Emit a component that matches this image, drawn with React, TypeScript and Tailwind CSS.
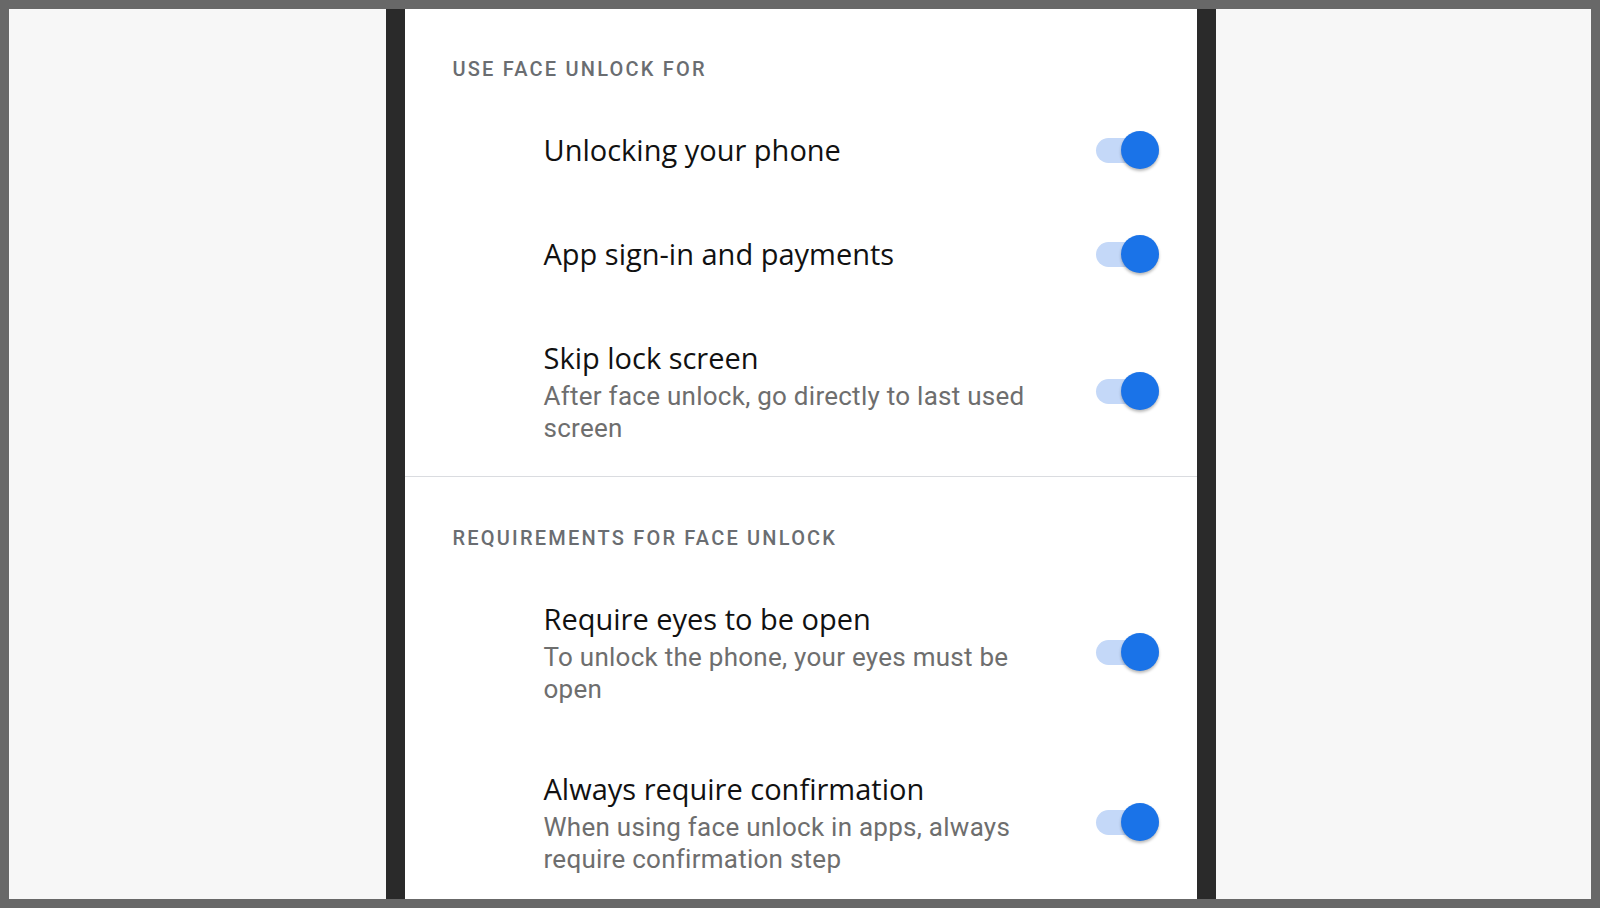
import React from "react";

const sections = [
  {
    title: "Use face unlock for",
    items: [
      { label: "Unlocking your phone" },
      { label: "App sign-in and payments" },
      { label: "Skip lock screen", sub: "After face unlock, go directly to last used screen" },
    ],
  },
  {
    title: "Requirements for face unlock",
    items: [
      { label: "Require eyes to be open", sub: "To unlock the phone, your eyes must be open" },
      { label: "Always require confirmation", sub: "When using face unlock in apps, always require confirmation step" },
    ],
  },
];

function Toggle() {
  return (
    <div className="relative w-[63px] h-[38px] shrink-0 flex items-center">
      <div className="w-full h-[25px] rounded-full bg-[#c4d8f8]" />
      <div className="absolute right-0 top-0 w-[38px] h-[38px] rounded-full bg-[#1a73e8] shadow-[0_2px_3px_rgba(0,0,0,0.28)]" />
    </div>
  );
}

export default function App() {
  return (
    <main className="w-[1600px] h-[908px] bg-[#686868] p-[9px] font-['Roboto',sans-serif]">
      <div className="h-full bg-[#f7f7f7] flex justify-center pl-[1px]">
        <div className="w-[830px] h-full bg-[#2a2a2a] px-[19px]">
          <div className="h-full bg-white overflow-hidden">
            {sections.map((section, si) => (
              <section key={si} className={si > 0 ? "border-t border-[#dadce0]" : ""}>
                <h2
                  className={`pl-[48px] ${si > 0 ? "pt-[49px]" : "pt-12"} pb-[17px] text-[20px] leading-6 font-medium uppercase tracking-[0.11em] text-[#6a6d71]`}
                >
                  {section.title}
                </h2>
                {section.items.map((item) => (
                  <div key={item.label} className="flex items-center pl-[139px] pr-[38px] py-8">
                    <div className="flex-1 min-w-0 pr-12">
                      <div className="font-['Open_Sans',sans-serif] text-[29px] leading-10 text-[#111]">{item.label}</div>
                      {item.sub && (
                        <div className="mt-[2px] text-[26px] leading-8 tracking-[0.01em] text-[#6e6e6e]">{item.sub}</div>
                      )}
                    </div>
                    <Toggle />
                  </div>
                ))}
              </section>
            ))}
          </div>
        </div>
      </div>
    </main>
  );
}
